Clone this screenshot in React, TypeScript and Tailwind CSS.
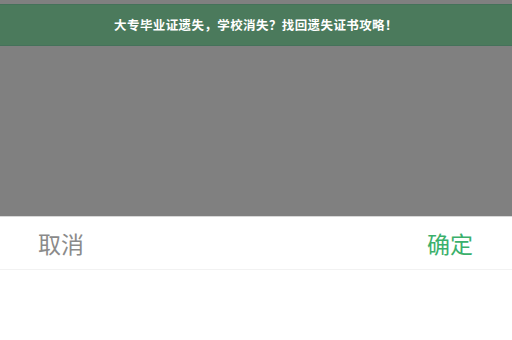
export default function App() {
  return (
    <div className="w-[512px] h-[340px] flex flex-col bg-white font-['Noto_Sans_CJK_SC',sans-serif]">
      <div className="h-[216px] bg-[#808080] pt-[4px] flex flex-col">
        <div className="h-[42px] bg-[#4b7a5c] border-y border-[#45725a] flex items-center justify-center">
          <span className="text-[12.5px] font-bold text-white tracking-[0.4px]">
            大专毕业证遗失，学校消失？找回遗失证书攻略！
          </span>
        </div>
      </div>
      <div className="h-[1px] bg-[#d8d8d8]" />
      <div className="h-[53px] flex items-center justify-between pl-[38px] pr-[39px] border-b border-[#f2f2f2]">
        <span className="text-[23px] leading-none text-[#8a8a8a]">取消</span>
        <span className="text-[23px] leading-none text-[#3bb06b]">确定</span>
      </div>
      <div className="flex-1 bg-white" />
    </div>
  );
}
